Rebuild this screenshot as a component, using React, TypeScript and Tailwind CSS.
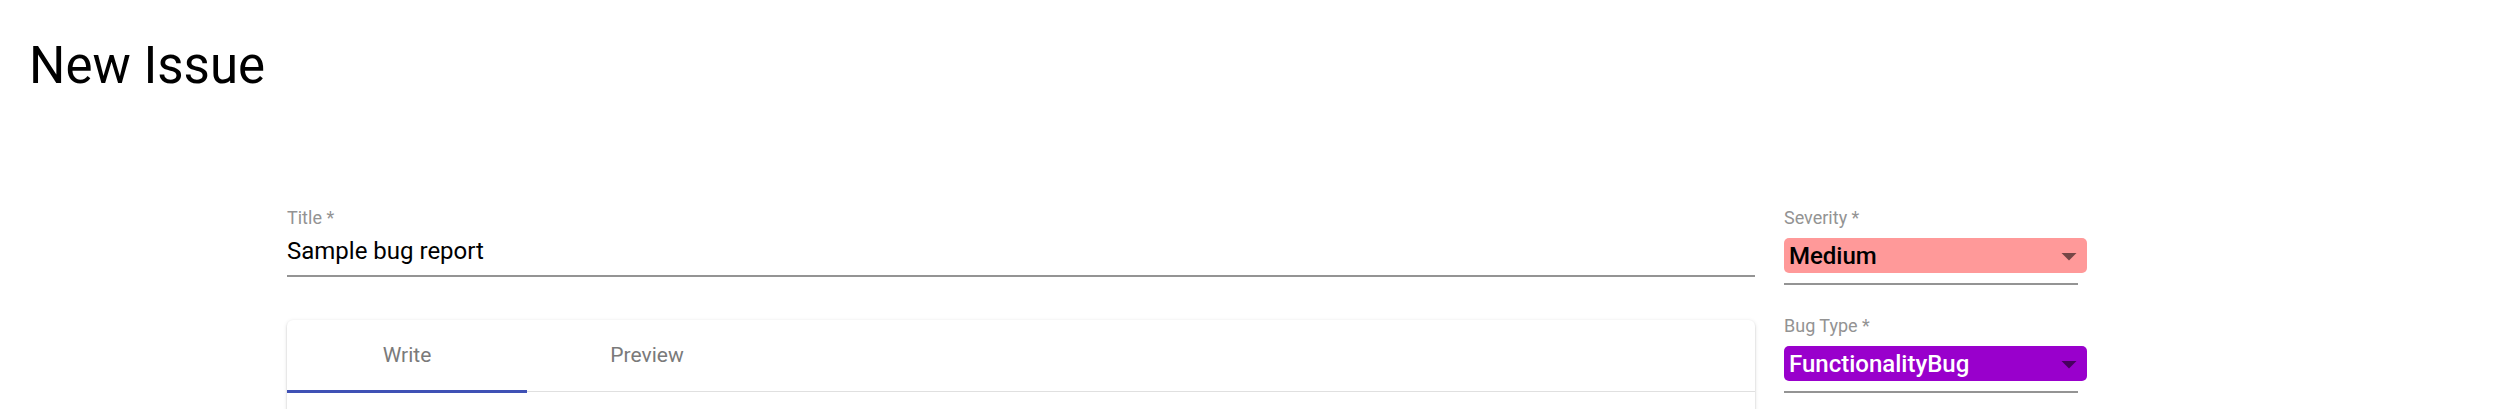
import { useState } from "react";

const font = { fontFamily: "Roboto, 'Liberation Sans', sans-serif" };

function ArrowDrop({ color }: { color: string }) {
  return (
    <svg
      viewBox="0 0 24 24"
      className="absolute right-0 top-1/2 h-[36px] w-[36px] -translate-y-1/2"
      fill={color}
    >
      <path d="M7 10l5 5 5-5z" />
    </svg>
  );
}

function SelectField({
  label,
  value,
  boxClass,
  arrow,
}: {
  label: string;
  value: string;
  boxClass: string;
  arrow: string;
}) {
  return (
    <div className="flex flex-col">
      <div className="text-[18px] leading-[18px] text-[#939393]">{label}</div>
      <div className={`relative mt-[11px] h-[35px] w-[303px] rounded-[5px] pl-[5px] ${boxClass}`}>
        <div className="pt-[6px] text-[24px] font-medium leading-[24px]">{value}</div>
        <ArrowDrop color={arrow} />
      </div>
      <div className="mt-[10px] h-[2px] w-[294px] bg-[#949494]" />
    </div>
  );
}

export default function App() {
  const [tab, setTab] = useState(0);
  const tabs = ["Write", "Preview"];

  return (
    <div className="min-h-[409px] bg-white" style={font}>
      <h1 className="pl-[29px] pt-[40px] text-[51px] font-normal leading-[51px] text-black">New Issue</h1>

      <div className="mt-[118px] flex gap-[29px] pl-[287px]">
        <div className="flex w-[1468px] flex-col">
          <label className="text-[18px] leading-[18px] text-[#939393]">Title *</label>
          <div className="mt-[12px] text-[24px] leading-[24px] text-black">Sample bug report</div>
          <div className="mt-[12px] h-[2px] bg-[#949494]" />

          <div className="mt-[43px] min-h-[120px] rounded-[6px] bg-white shadow-[0_3px_2px_-1px_rgba(0,0,0,0.2),0_1px_2px_0_rgba(0,0,0,0.14),0_1px_4px_0_rgba(0,0,0,0.12)]">
            <div className="relative flex h-[72px] border-b-[1.5px] border-[#e0e0e0]">
              {tabs.map((t, i) => (
                <button
                  key={t}
                  onClick={() => setTab(i)}
                  className="relative flex w-[240px] items-center justify-center text-[21px] text-[#7a7a7a]"
                >
                  {t}
                  {tab === i && (
                    <span className="absolute bottom-[-1.5px] left-0 h-[3px] w-full bg-[#3f51b5]" />
                  )}
                </button>
              ))}
            </div>
          </div>
        </div>

        <div className="flex flex-col gap-[32px]">
          <SelectField label="Severity *" value="Medium" boxClass="bg-[#ff9999] text-black" arrow="rgba(0,0,0,0.54)" />
          <SelectField label="Bug Type *" value="FunctionalityBug" boxClass="bg-[#9900cc] text-white" arrow="rgba(0,0,0,0.54)" />
        </div>
      </div>
    </div>
  );
}
